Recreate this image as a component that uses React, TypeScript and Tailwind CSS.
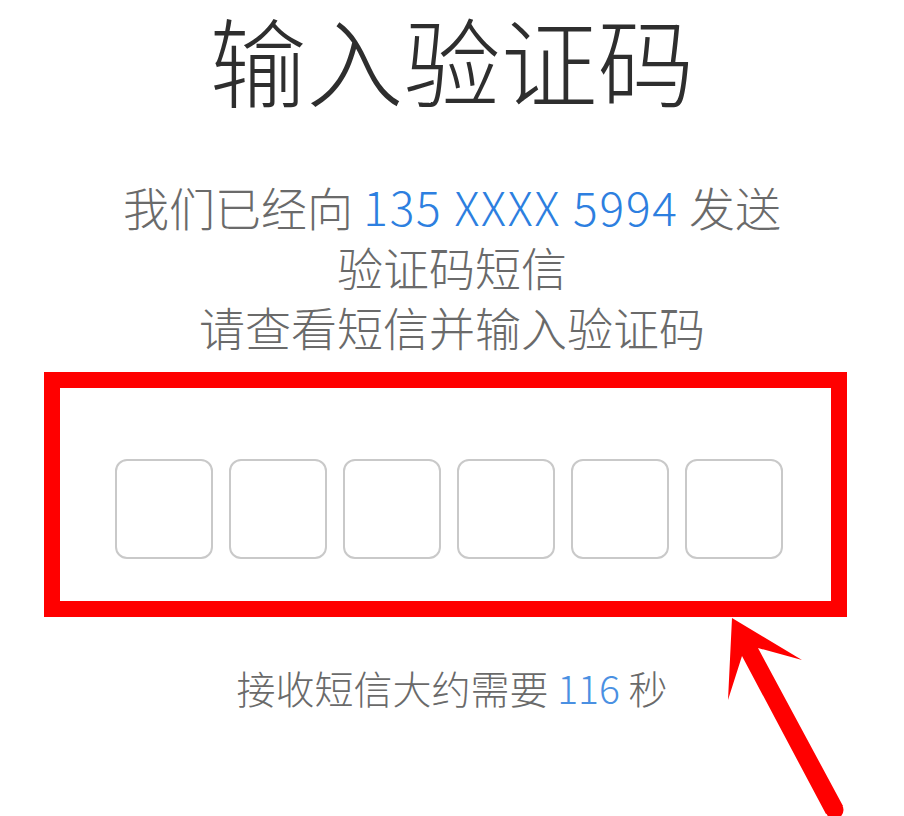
export default function App() {
  const cells = [0, 1, 2, 3, 4, 5];

  return (
    <div className="relative w-[904px] h-[816px] bg-white font-['Noto_Sans_CJK_SC','Noto_Sans',sans-serif]">
      <div className="flex flex-col items-center pt-[2px]">
        <h1 className="text-[97px] leading-[112px] font-light whitespace-nowrap text-[#2e2e2e]">输入验证码</h1>

        <div className="mt-[62px] text-center text-[46px] leading-[60px] font-light text-[#6a6a6a]">
          <p>
            我们已经向 <span className="tracking-[1.8px] text-[#2d7fe0]">135 XXXX 5994</span> 发送
          </p>
          <p>验证码短信</p>
          <p>请查看短信并输入验证码</p>
        </div>

        <div className="mt-[16px] self-start ml-[44px] w-[803px] h-[245px] border-[16px] border-[#ff0000]">
          <div className="flex gap-[16px] pt-[71px] pl-[55px]">
            {cells.map(i => (
              <div key={i} className="w-[98px] h-[100px] rounded-[12px] border-2 border-[#c9c9c9] bg-white" />
            ))}
          </div>
        </div>

        <p className="mt-[50px] text-[39px] leading-[40px] font-light text-[#6a6a6a]">
          接收短信大约需要 <span className="text-[#4a90e2]">116</span> 秒
        </p>
      </div>

      {/* annotation arrow pointing at the code boxes */}
      <svg className="absolute left-[720px] top-[610px] pointer-events-none" width="140" height="206" viewBox="720 610 140 206">
        <polygon points="732,618 802,660 758,648 843,806 826,814 742,656 728,700" fill="#ff0000" />
        <circle cx="834.5" cy="810" r="9" fill="#ff0000" />
      </svg>
    </div>
  );
}
